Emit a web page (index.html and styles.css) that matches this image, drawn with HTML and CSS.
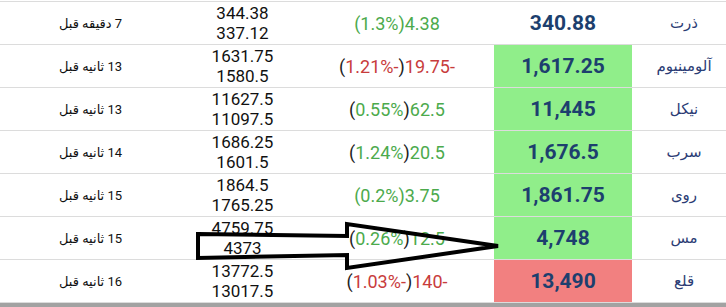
FILE: index.html
```html
<!DOCTYPE html>
<html lang="fa" dir="rtl">
<head>
<meta charset="utf-8">
<link rel="stylesheet" href="styles.css">
</head>
<body>
<div class="page">
  <table class="prices">
    <tbody>
      <tr>
        <td class="name">ذرت</td>
        <td class="price">340.88</td>
        <td class="change"><span class="ltr"><span class="up">(1.3%)4.38</span></span></td>
        <td class="hilo"><span class="ltr">344.38<br>337.12</span></td>
        <td class="time">7 دقیقه قبل</td>
      </tr>
      <tr>
        <td class="name">آلومینیوم</td>
        <td class="price green">1,617.25</td>
        <td class="change"><span class="ltr">(<span class="down">1.21%-</span>)<span class="down">19.75-</span></span></td>
        <td class="hilo"><span class="ltr">1631.75<br>1580.5</span></td>
        <td class="time">13 ثانیه قبل</td>
      </tr>
      <tr>
        <td class="name">نیکل</td>
        <td class="price green">11,445</td>
        <td class="change"><span class="ltr">(<span class="up">0.55%</span>)<span class="up">62.5</span></span></td>
        <td class="hilo"><span class="ltr">11627.5<br>11097.5</span></td>
        <td class="time">13 ثانیه قبل</td>
      </tr>
      <tr>
        <td class="name">سرب</td>
        <td class="price green">1,676.5</td>
        <td class="change"><span class="ltr">(<span class="up">1.24%</span>)<span class="up">20.5</span></span></td>
        <td class="hilo"><span class="ltr">1686.25<br>1601.5</span></td>
        <td class="time">14 ثانیه قبل</td>
      </tr>
      <tr>
        <td class="name">روی</td>
        <td class="price green">1,861.75</td>
        <td class="change"><span class="ltr"><span class="up">(0.2%)3.75</span></span></td>
        <td class="hilo"><span class="ltr">1864.5<br>1765.25</span></td>
        <td class="time">15 ثانیه قبل</td>
      </tr>
      <tr>
        <td class="name">مس</td>
        <td class="price green">4,748</td>
        <td class="change"><span class="ltr">(<span class="up">0.26%</span>)<span class="up">12.5</span></span></td>
        <td class="hilo"><span class="ltr">4759.75<br>4373</span></td>
        <td class="time">15 ثانیه قبل</td>
      </tr>
      <tr>
        <td class="name">قلع</td>
        <td class="price red">13,490</td>
        <td class="change"><span class="ltr">(<span class="down">1.03%-</span>)<span class="down">140-</span></span></td>
        <td class="hilo"><span class="ltr">13772.5<br>13017.5</span></td>
        <td class="time">16 ثانیه قبل</td>
      </tr>
    </tbody>
  </table>
  <div class="bottom-bar"></div>
  <svg class="arrow" width="726" height="307" viewBox="0 0 726 307" aria-hidden="true">
    <polygon points="198,234 347,236 347,224 498,246 347,268 347,255 198,258" fill="none" stroke="#000" stroke-width="4" stroke-linejoin="miter"/>
  </svg>
</div>
</body>
</html>
```

FILE: styles.css
```css
html, body {
  margin: 0;
  padding: 0;
  background: #fff;
}

.page {
  position: relative;
  width: 726px;
  height: 307px;
  overflow: hidden;
  padding-top: 1px;
  box-sizing: border-box;
  font-family: "Roboto", "DejaVu Sans", sans-serif;
}

.prices {
  width: 726px;
  border-collapse: collapse;
  table-layout: fixed;
}

.prices td {
  height: 42px;
  padding: 0;
  border-top: 1px solid #dcdcdc;
  border-bottom: 1px solid #dcdcdc;
  text-align: center;
  vertical-align: middle;
}

.name {
  width: 84px;
  padding-left: 10px !important;
  font-size: 15px;
  color: #2b3c74;
}

.price {
  width: 138px;
  font-size: 21px;
  font-weight: bold;
  color: #1d3f6e;
}

.price.green {
  background: #90ee8a;
}

.price.red {
  background: #f28080;
}

.change {
  width: 194px;
  font-size: 18px;
  color: #222;
}

.hilo {
  width: 115px;
  font-size: 17px;
  line-height: 20px;
  color: #111;
}

.time {
  font-size: 13px;
  color: #111;
  padding-right: 4px !important;
}

.ltr {
  direction: ltr;
  unicode-bidi: isolate;
  display: inline-block;
}

.up {
  color: #4caa4c;
}

.down {
  color: #c83c3c;
}

.bottom-bar {
  height: 5px;
  background: #a2a2a2;
}

.arrow {
  position: absolute;
  left: 0;
  top: 0;
  pointer-events: none;
}
```
